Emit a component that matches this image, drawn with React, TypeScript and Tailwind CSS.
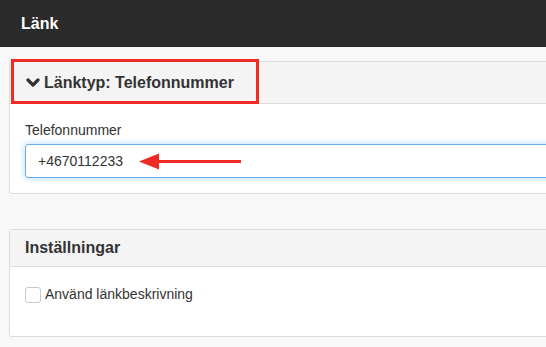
export default function App(): React.ReactElement {
  return (
    <div
      className="h-[347px] w-[546px] overflow-hidden bg-[#f8f8f8] text-[#333]"
      style={{ fontFamily: '"Liberation Sans", Arial, sans-serif' }}
    >
      <div className="flex h-[47px] items-center bg-[#2b2b2b] px-[21px]">
        <span className="text-[16px] font-bold text-white">Länk</span>
      </div>

      {/* Link type panel */}
      <div className="ml-[9px] mt-[14px] w-[600px] rounded-[3px] border border-[#dcdcdc] bg-white">
        <div className="relative flex h-[42px] items-center border-b border-[#dcdcdc] bg-[#f4f4f4] pl-[16px]">
          <svg className="mr-[4px]" width="14" height="10" viewBox="0 0 14 10">
            <polyline
              points="2,2 7,7 12,2"
              fill="none"
              stroke="#333"
              strokeWidth="3.2"
              strokeLinecap="round"
              strokeLinejoin="round"
            />
          </svg>
          <span className="text-[16px] font-bold">Länktyp: Telefonnummer</span>
          <div className="pointer-events-none absolute left-[1px] top-[-3px] h-[45px] w-[248px] border-[3px] border-[#ef2b24]" />
        </div>
        <div className="px-[15px] pb-[15px] pt-[18px]">
          <div className="mb-[6px] text-[14px] leading-[16px]">Telefonnummer</div>
          <div className="relative flex h-[34px] items-center rounded-[3px] border border-[#66afe9] pl-[12px] text-[14px] shadow-[0_0_6px_rgba(102,175,233,0.5)]">
            <span>+4670112233</span>
            <svg
              className="absolute left-[113px] top-[8px]"
              width="103"
              height="17"
              viewBox="0 0 103 17"
            >
              <polygon points="0,8.5 20,0.5 20,16.5" fill="#ef2b24" />
              <rect x="18" y="7" width="84" height="3" fill="#ef2b24" />
            </svg>
          </div>
        </div>
      </div>

      {/* Settings panel */}
      <div className="ml-[9px] mt-[35px] w-[600px] rounded-[3px] border border-[#dcdcdc] bg-white">
        <div className="flex h-[37px] items-center border-b border-[#dcdcdc] bg-[#f4f4f4] pl-[15px]">
          <span className="text-[16px] font-bold">Inställningar</span>
        </div>
        <div className="flex items-center px-[15px] pb-[31px] pt-[17px]">
          <span className="mr-[4px] h-[16px] w-[16px] rounded-[3px] border border-[#c8c8c8] bg-white" />
          <span className="text-[14px]">Använd länkbeskrivning</span>
        </div>
      </div>
    </div>
  );
}
